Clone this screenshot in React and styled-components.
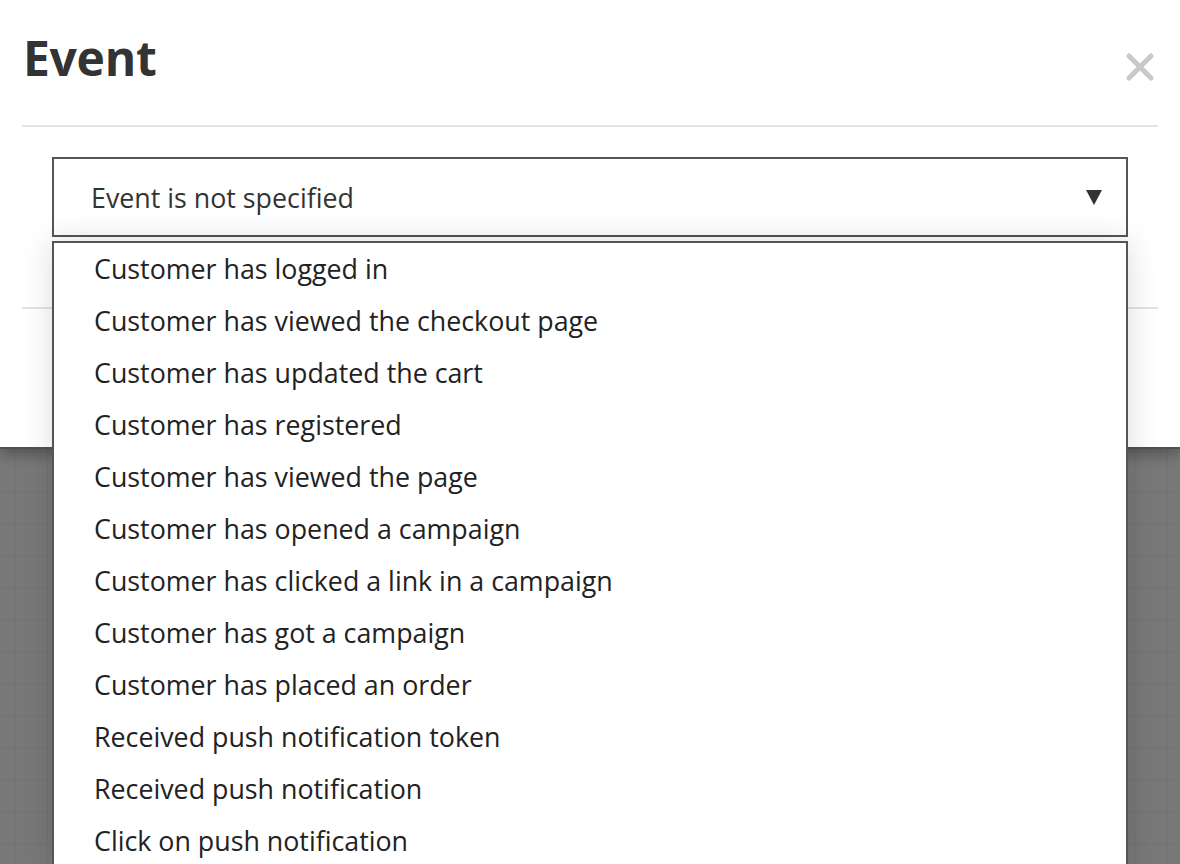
import React from 'react';
import styled, { createGlobalStyle } from 'styled-components';

const GlobalStyle = createGlobalStyle`
  html, body {
    margin: 0;
    padding: 0;
  }
  body {
    font-family: "Open Sans", "Noto Sans", sans-serif;
    background-color: #787878;
    background-image:
      linear-gradient(rgba(0, 0, 0, 0.045) 1px, transparent 1px),
      linear-gradient(90deg, rgba(0, 0, 0, 0.045) 1px, transparent 1px);
    background-size: 32px 32px;
    background-position: 15px 11px;
    min-height: 864px;
    overflow: hidden;
  }
`;

const Modal = styled.div`
  position: relative;
  background: #fff;
  height: 449px;
  border-bottom: 2px solid #505050;
  box-shadow: 0 4px 14px rgba(0, 0, 0, 0.35);
  padding: 0 22px;
  box-sizing: border-box;
`;

const Header = styled.div`
  display: flex;
  justify-content: space-between;
  align-items: flex-start;
  height: 127px;
  border-bottom: 2px solid #e3e3e3;
  box-sizing: border-box;
`;

const Title = styled.h2`
  margin: 21px 0 0 1px;
  font-size: 48px;
  font-weight: 700;
  line-height: 74px;
  color: #333;
  letter-spacing: -0.3px;
`;

const Close = styled.button`
  border: none;
  background: none;
  padding: 0;
  margin: 53px 4px 0 0;
  width: 28px;
  height: 28px;
  cursor: pointer;
`;

const Body = styled.div`
  position: relative;
  padding: 30px 30px 0;
  height: 182px;
  border-bottom: 2px solid #e3e3e3;
  box-sizing: border-box;
`;

const SelectBox = styled.div`
  display: flex;
  align-items: center;
  justify-content: space-between;
  height: 80px;
  border: 2px solid #555;
  box-sizing: border-box;
  padding: 0 24px 0 37px;
  font-size: 26.8px;
  color: #333;
  background: #fff;
`;

const Menu = styled.ul`
  position: absolute;
  top: 114px;
  left: 30px;
  right: 30px;
  margin: 0;
  padding: 0;
  list-style: none;
  background: #fff;
  border: 2px solid #555;
  box-shadow: 0 0 30px rgba(0, 0, 0, 0.14);
  z-index: 2;
`;

const Item = styled.li`
  height: 52px;
  line-height: 52px;
  padding-left: 40px;
  font-size: 26.8px;
  color: #222;
  white-space: nowrap;
`;

const events = [
  'Customer has logged in',
  'Customer has viewed the checkout page',
  'Customer has updated the cart',
  'Customer has registered',
  'Customer has viewed the page',
  'Customer has opened a campaign',
  'Customer has clicked a link in a campaign',
  'Customer has got a campaign',
  'Customer has placed an order',
  'Received push notification token',
  'Received push notification',
  'Click on push notification',
];

const App = () => (
  <>
    <GlobalStyle />
    <Modal>
      <Header>
        <Title>Event</Title>
        <Close aria-label="Close">
          <svg width="28" height="28" viewBox="0 0 28 28">
            <path d="M3 3 L25 25 M25 3 L3 25" stroke="#c9c9c9" strokeWidth="5" strokeLinecap="round" />
          </svg>
        </Close>
      </Header>
      <Body>
        <SelectBox>
          <span>Event is not specified</span>
          <svg width="16" height="16" viewBox="0 0 16 16">
            <polygon points="0,1 16,1 8,16" fill="#333" />
          </svg>
        </SelectBox>
        <Menu>
          {events.map((e) => (
            <Item key={e}>{e}</Item>
          ))}
        </Menu>
      </Body>
    </Modal>
  </>
);

export default App;
